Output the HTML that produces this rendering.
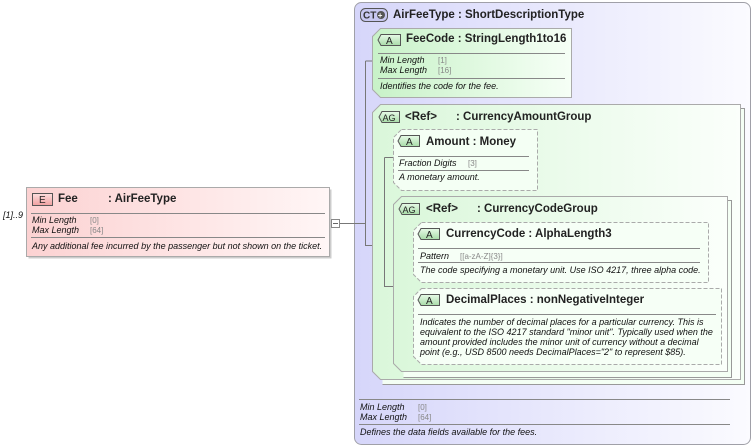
<!DOCTYPE html>
<html><head><meta charset="utf-8"><style>
html,body{margin:0;padding:0;background:#fff;width:753px;height:447px;overflow:hidden}
svg text{font-family:"Liberation Sans",sans-serif}
.h{font-size:11.5px;font-weight:bold;fill:#222}
.i{font-size:9px;font-style:italic;fill:#111}
.v{font-size:8px;fill:#888}
.b{font-size:10px;fill:#222}
</style></head><body>
<svg width="753" height="447" viewBox="0 0 753 447" xmlns="http://www.w3.org/2000/svg">
<defs>
<linearGradient id="ct" x1="0" x2="1" y1="0" y2="0"><stop offset="0" stop-color="#d6d6fa"/><stop offset="1" stop-color="#fbfbff"/></linearGradient>
<linearGradient id="gr" x1="0" x2="1" y1="0" y2="0"><stop offset="0" stop-color="#c8f2c8"/><stop offset="1" stop-color="#f6fff6"/></linearGradient>
<linearGradient id="gr2" x1="0" x2="1" y1="0" y2="0"><stop offset="0" stop-color="#daf7da"/><stop offset="1" stop-color="#fbfffb"/></linearGradient>
<linearGradient id="pk" x1="0" x2="1" y1="0" y2="0"><stop offset="0" stop-color="#fcd2d2"/><stop offset="1" stop-color="#fff6f6"/></linearGradient>
<linearGradient id="bd" x1="0" x2="0" y1="0" y2="1"><stop offset="0" stop-color="#e8fae8"/><stop offset="1" stop-color="#a8dca8"/></linearGradient>
<linearGradient id="bp" x1="0" x2="0" y1="0" y2="1"><stop offset="0" stop-color="#fde0e0"/><stop offset="1" stop-color="#f0a0a0"/></linearGradient>
</defs>

<rect x="354.5" y="2.5" width="396" height="442" rx="7" fill="url(#ct)" stroke="#a0a0a8"/>
<rect x="360.5" y="8.5" width="27" height="13" rx="5" fill="#c8c8f0" stroke="#555"/>
<text x="363" y="18.5" class="b" style="font-weight:bold;fill:#333">CT</text>
<circle cx="381" cy="15" r="4" fill="#555"/><text x="377.7" y="18.2" style="font-size:8px;font-weight:bold;fill:#fff">+</text>
<text x="393" y="18" class="h">AirFeeType : ShortDescriptionType</text>

<path d="M340 223.5H365.5M365.5 61V245.5H372M365.5 61H372" stroke="#777" fill="none"/>

<!-- FeeCode -->
<path d="M380.5 28.5H571.5V97.5H380.5L372.5 89.5V36.5Z" fill="url(#gr)" stroke="#aaa"/>
<path d="M381 34.5H400.5V45.5H381L378 40Z" fill="url(#bd)" stroke="#555"/>
<text x="386" y="44" class="b">A</text>
<text x="406" y="42" class="h">FeeCode : StringLength1to16</text>
<path d="M378 53.5H565M378 78.5H565" stroke="#888"/>
<text x="380" y="63" class="i">Min Length</text><text x="438" y="63" class="v">[1]</text>
<text x="380" y="73" class="i">Max Length</text><text x="438" y="73" class="v">[16]</text>
<text x="380" y="89" class="i">Identifies the code for the fee.</text>

<!-- AG CurrencyAmountGroup -->
<path d="M382.5 108.5H744.5V384.5H382.5" fill="#f4fff4" stroke="#999"/>
<path d="M380.5 104.5H740.5V379.5H380.5L372.5 371.5V112.5Z" fill="url(#gr2)" stroke="#aaa"/>
<path d="M382 111.5H399.5V122.5H382L379 117Z" fill="url(#bd)" stroke="#555"/>
<text x="382.5" y="121" style="font-size:9px;fill:#222">AG</text>
<text x="405" y="120" class="h">&lt;Ref&gt;</text><text x="456" y="120" class="h">: CurrencyAmountGroup</text>

<path d="M384.5 157.5H393M384.5 157.5V286.5H403.5M403.5 252.5V324.5H413M403.5 252.5H413M384.5 286.5H393" stroke="#777" fill="none"/>

<!-- Amount -->
<path d="M401.5 129.5H537.5V190.5H401.5L393.5 182.5V137.5Z" fill="#f4fff4" stroke="#aaa" stroke-dasharray="4,2"/>
<path d="M401 135.5H419.5V146.5H401L398 141Z" fill="url(#bd)" stroke="#555"/>
<text x="406" y="145" class="b">A</text>
<text x="426" y="145" class="h">Amount  : Money</text>
<path d="M398 156.5H529M398 170.5H529" stroke="#888"/>
<text x="399" y="166" class="i">Fraction Digits</text><text x="468" y="166" class="v">[3]</text>
<text x="399" y="180" class="i">A monetary amount.</text>

<!-- AG CurrencyCodeGroup -->
<path d="M403.5 200.5H731.5V377.5H403.5" fill="#f4fff4" stroke="#999"/>
<path d="M401.5 196.5H727.5V371.5H401.5L393.5 363.5V204.5Z" fill="url(#gr2)" stroke="#aaa"/>
<path d="M402 203.5H419.5V214.5H402L399 209Z" fill="url(#bd)" stroke="#555"/>
<text x="402.5" y="213" style="font-size:9px;fill:#222">AG</text>
<text x="426" y="212" class="h">&lt;Ref&gt;</text><text x="477" y="212" class="h">: CurrencyCodeGroup</text>

<!-- CurrencyCode -->
<path d="M421.5 222.5H708.5V282.5H421.5L413.5 274.5V230.5Z" fill="#f6fff6" stroke="#aaa" stroke-dasharray="4,2"/>
<path d="M421 228.5H439.5V239.5H421L418 234Z" fill="url(#bd)" stroke="#555"/>
<text x="426" y="238" class="b">A</text>
<text x="446" y="237" class="h">CurrencyCode : AlphaLength3</text>
<path d="M418 248.5H700M418 262.5H700" stroke="#888"/>
<text x="420" y="259" class="i">Pattern</text><text x="460" y="259" class="v">[[a-zA-Z]{3}]</text>
<text x="420" y="273" class="i">The code specifying a monetary unit. Use ISO 4217, three alpha code.</text>

<!-- DecimalPlaces -->
<path d="M421.5 288.5H721.5V364.5H421.5L413.5 356.5V296.5Z" fill="#f6fff6" stroke="#aaa" stroke-dasharray="4,2"/>
<path d="M421 294.5H439.5V305.5H421L418 300Z" fill="url(#bd)" stroke="#555"/>
<text x="426" y="304" class="b">A</text>
<text x="446" y="303" class="h">DecimalPlaces : nonNegativeInteger</text>
<path d="M418 314.5H716" stroke="#888"/>
<text x="420" y="325" class="i">Indicates the number of decimal places for a particular currency. This is</text>
<text x="420" y="335" class="i">equivalent to the ISO 4217 standard "minor unit". Typically used when the</text>
<text x="420" y="345" class="i">amount provided includes the minor unit of currency without a decimal</text>
<text x="420" y="355" class="i">point (e.g., USD 8500 needs DecimalPlaces="2" to represent $85).</text>

<path d="M359 399.5H730M359 424.5H730" stroke="#888"/>
<text x="360" y="410" class="i">Min Length</text><text x="418" y="410" class="v">[0]</text>
<text x="360" y="420" class="i">Max Length</text><text x="418" y="420" class="v">[64]</text>
<text x="360" y="435" class="i">Defines the data fields available for the fees.</text>

<!-- Fee element -->
<rect x="28.5" y="189.5" width="303" height="69" fill="#ccc"/>
<rect x="26.5" y="187.5" width="303" height="69" fill="url(#pk)" stroke="#aaa"/>
<rect x="32.5" y="193.5" width="20" height="12" fill="url(#bp)" stroke="#555"/>
<text x="39" y="203" class="b">E</text>
<text x="58" y="202" class="h">Fee</text><text x="108" y="202" class="h">: AirFeeType</text>
<path d="M31 213.5H325M31 237.5H325" stroke="#888"/>
<text x="32" y="223" class="i">Min Length</text><text x="90" y="223" class="v">[0]</text>
<text x="32" y="233" class="i">Max Length</text><text x="90" y="233" class="v">[64]</text>
<text x="32" y="249" class="i">Any additional fee incurred by the passenger but not shown on the ticket.</text>
<text x="3" y="218" class="i">[1]..9</text>
<rect x="331.5" y="219.5" width="8" height="8" fill="#fff" stroke="#888"/>
<path d="M333 223.5H338" stroke="#666"/>
</svg>
</body></html>
